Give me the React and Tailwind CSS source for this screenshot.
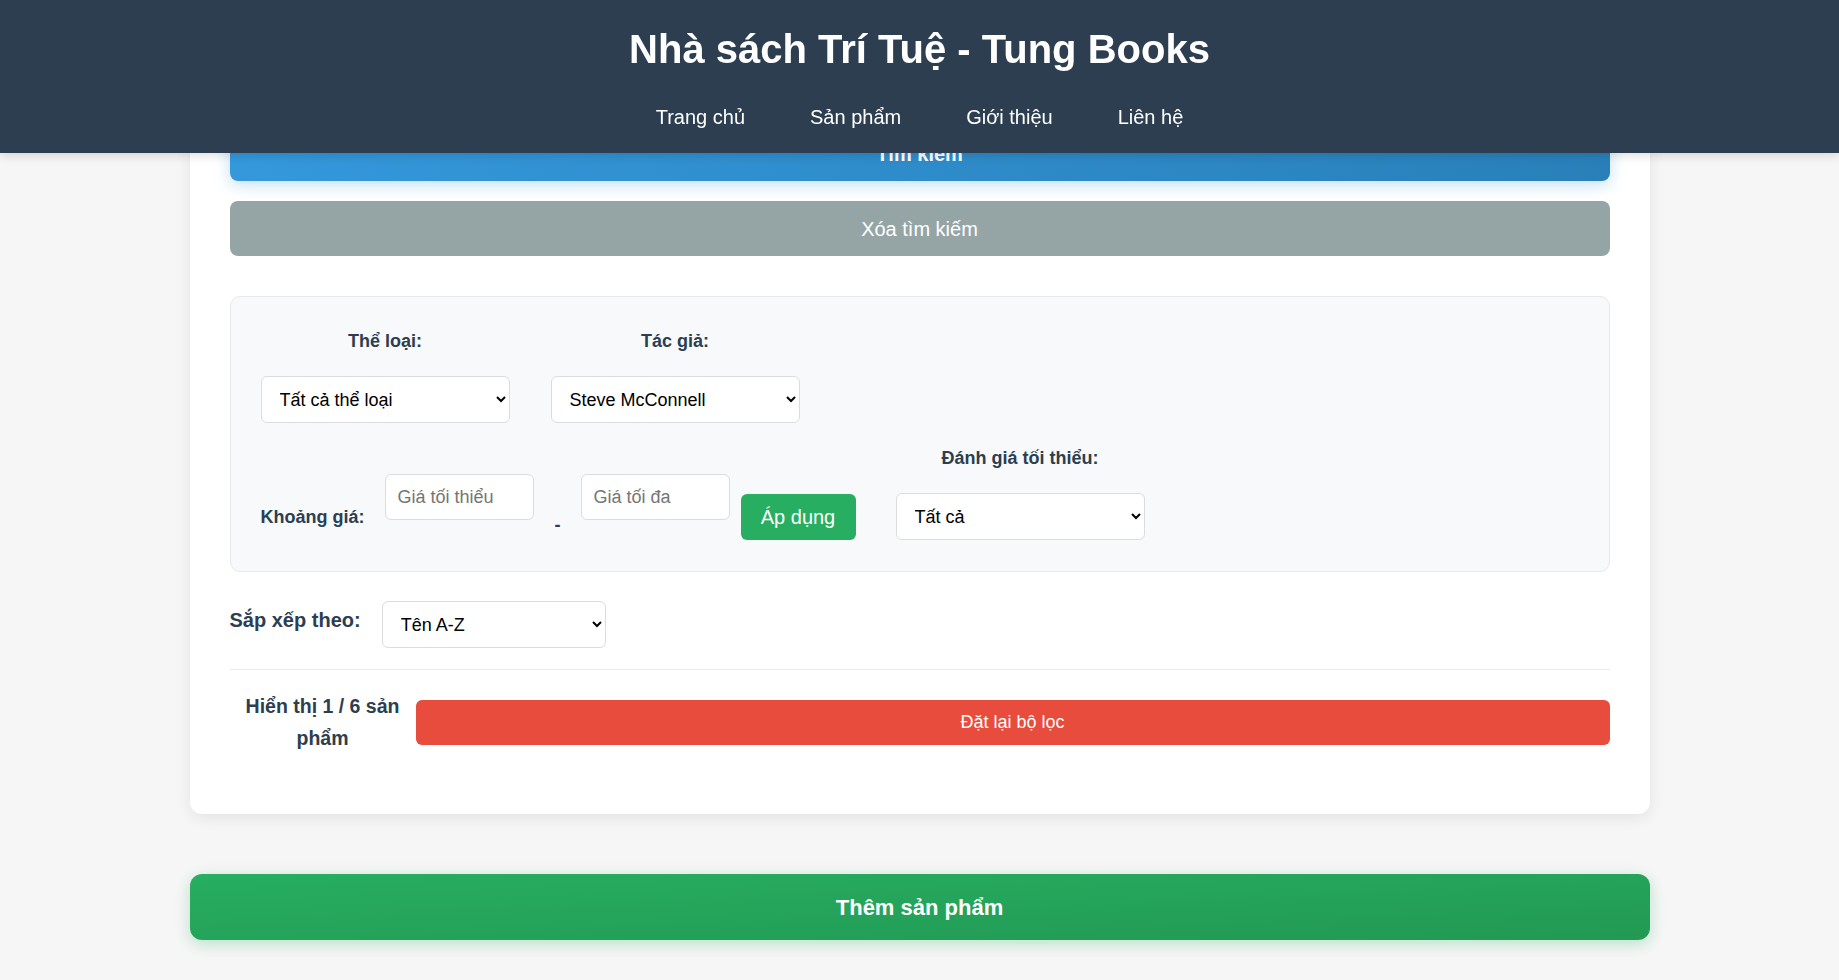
import React from "react";

function Select({ value, options, className }) {
  return (
    <select
      defaultValue={value}
      className={
        "h-[47px] bg-white border border-[#dcdcdc] rounded-[6px] pl-[14px] pr-[8px] text-[18px] text-black outline-none " +
        (className || "")
      }
    >
      {options.map((o) => (
        <option key={o}>{o}</option>
      ))}
    </select>
  );
}

export default function App() {
  return (
    <div
      className="min-h-[980px] bg-[#f6f6f6] text-[#2c3e50]"
      style={{ fontFamily: '"Liberation Sans", Arial, sans-serif' }}
    >
      <header className="fixed top-0 inset-x-0 z-20 h-[153px] bg-[#2c3e50] shadow-[0_2px_10px_rgba(0,0,0,0.15)] flex flex-col items-center">
        <h1 className="mt-[25px] text-[40px] leading-[48px] font-bold text-white">
          Nhà sách Trí Tuệ - Tung Books
        </h1>
        <nav className="mt-[32px] flex gap-[65px] text-[20px] leading-[24px] text-white">
          <a>Trang chủ</a>
          <a>Sản phẩm</a>
          <a>Giới thiệu</a>
          <a>Liên hệ</a>
        </nav>
      </header>

      <main className="pt-[20px] pb-[40px]">
        <section className="w-[1460px] mx-auto bg-white rounded-[12px] shadow-[0_4px_16px_rgba(0,0,0,0.08)] px-[40px] pt-[40px] pb-[60px]">
          <input
            className="block w-full h-[50px] border border-[#ddd] rounded-[8px] px-4 text-[18px]"
            placeholder="Tìm kiếm sách..."
          />
          <button className="mt-[16px] w-full h-[55px] rounded-[8px] bg-gradient-to-r from-[#3498db] to-[#2980b9] text-white text-[20px] font-bold shadow-[0_4px_15px_rgba(52,152,219,0.3)]">
            Tìm kiếm
          </button>
          <button className="mt-[20px] w-full h-[55px] rounded-[8px] bg-[#95a5a6] text-white text-[20px]">
            Xóa tìm kiếm
          </button>

          <div className="mt-[40px] h-[276px] border border-[#e6e9ec] bg-[#f8f9fa] rounded-[10px] pl-[30px] pt-[32px]">
            <div className="flex gap-[41px]">
              <div className="w-[249px] flex flex-col items-center">
                <label className="text-[18px] leading-[24px] font-bold">Thể loại:</label>
                <Select
                  className="mt-[23px] w-full"
                  value="Tất cả thể loại"
                  options={["Tất cả thể loại", "Lập trình", "Kinh tế", "Văn học"]}
                />
              </div>
              <div className="w-[249px] flex flex-col items-center">
                <label className="text-[18px] leading-[24px] font-bold">Tác giả:</label>
                <Select
                  className="mt-[23px] w-full"
                  value="Steve McConnell"
                  options={["Tất cả tác giả", "Steve McConnell", "Robert C. Martin"]}
                />
              </div>
            </div>

            <div className="mt-[23px] flex items-start">
              <div className="flex items-start">
                <span className="mt-[59px] text-[18px] leading-[24px] font-bold whitespace-nowrap">
                  Khoảng giá:
                </span>
                <input
                  className="ml-[20px] mt-[28px] w-[149px] h-[46px] bg-white border border-[#dcdcdc] rounded-[6px] px-[12px] text-[18px] placeholder:text-[#757575]"
                  placeholder="Giá tối thiểu"
                />
                <span className="ml-[21px] mt-[67px] text-[18px] leading-[24px] font-bold">-</span>
                <input
                  className="ml-[20px] mt-[28px] w-[149px] h-[46px] bg-white border border-[#dcdcdc] rounded-[6px] px-[12px] text-[18px] placeholder:text-[#757575]"
                  placeholder="Giá tối đa"
                />
                <button className="ml-[11px] mt-[48px] w-[115px] h-[46px] rounded-[6px] bg-[#27ae60] text-white text-[20px]">
                  Áp dụng
                </button>
              </div>
              <div className="ml-[40px] w-[249px] flex flex-col items-center">
                <label className="text-[18px] leading-[24px] font-bold whitespace-nowrap">
                  Đánh giá tối thiểu:
                </label>
                <Select
                  className="mt-[23px] w-full"
                  value="Tất cả"
                  options={["Tất cả", "1 sao", "2 sao", "3 sao", "4 sao", "5 sao"]}
                />
              </div>
            </div>
          </div>

          <div className="mt-[29px] flex items-start gap-[21px]">
            <span className="mt-[7px] text-[20px] leading-[24px] font-bold whitespace-nowrap">
              Sắp xếp theo:
            </span>
            <Select
              className="w-[224px]"
              value="Tên A-Z"
              options={["Tên A-Z", "Tên Z-A", "Giá tăng dần", "Giá giảm dần"]}
            />
          </div>

          <div className="mt-[21px] h-px bg-[#e9ecef]" />

          <div className="mt-[21px] flex items-center">
            <div className="w-[186px] text-center text-[19.5px] leading-[31.6px] font-bold">
              Hiển thị 1 / 6 sản phẩm
            </div>
            <button className="flex-1 h-[45px] rounded-[6px] bg-[#e74c3c] text-white text-[18px]">
              Đặt lại bộ lọc
            </button>
          </div>
        </section>

        <button className="block mt-[60px] mx-auto w-[1460px] h-[66px] rounded-[12px] bg-gradient-to-br from-[#27ae60] to-[#229954] text-white text-[22px] font-bold shadow-[0_4px_15px_rgba(39,174,96,0.3)]">
          Thêm sản phẩm
        </button>
      </main>
    </div>
  );
}
